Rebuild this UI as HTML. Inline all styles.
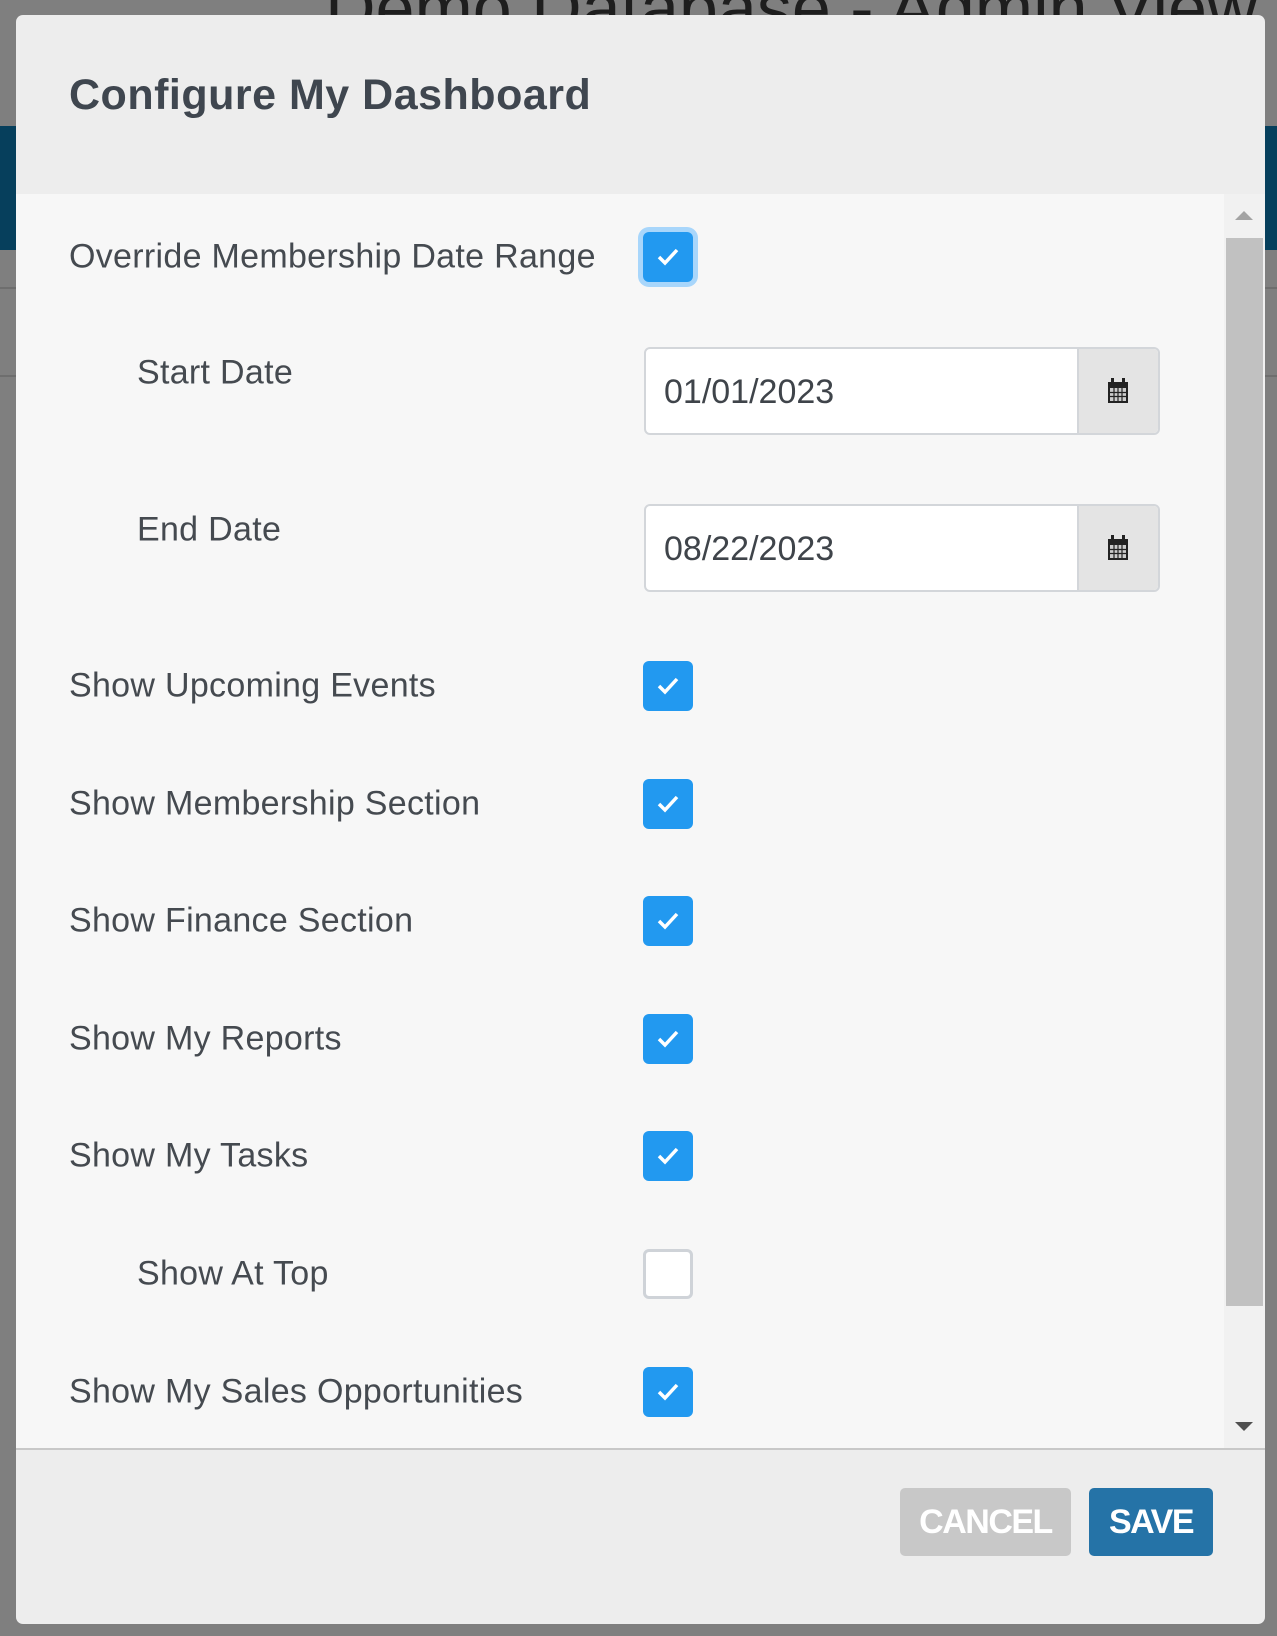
<!DOCTYPE html>
<html><head><meta charset="utf-8"><style>
*{box-sizing:border-box;margin:0;padding:0}
body{width:1277px;height:1636px;background:#7f7f7f;position:relative;overflow:hidden;font-family:"Liberation Sans",sans-serif;color:#454a50}
.bgtitle{position:absolute;left:325px;top:-32px;font-size:70px;color:#1e1e1e;white-space:nowrap}
.band{position:absolute;left:0;top:126px;width:1277px;height:124px;background:#063f5c}
.bgline{position:absolute;left:0;width:1277px;height:2px;background:#6e6e6e}
.modal{position:absolute;left:16px;top:15px;width:1249px;height:1609px;background:#ededed;border-radius:7px;overflow:hidden}
.title{position:absolute;left:53px;top:56px;font-size:43px;font-weight:bold;color:#3f464f;letter-spacing:0.5px}
.body{position:absolute;left:0;top:179px;width:1249px;height:1256px;background:#f7f7f7;border-bottom:2px solid #c8c8c8}
.sb{position:absolute;right:0;top:0;width:41px;height:1254px;background:#f1f1f1}
.thumb{position:absolute;left:2px;top:44px;width:37px;height:1068px;background:#c1c1c1}
.up{position:absolute;left:11px;top:17px;border-left:9px solid transparent;border-right:9px solid transparent;border-bottom:9px solid #a3a3a3}
.down{position:absolute;left:11px;top:1228px;border-left:9px solid transparent;border-right:9px solid transparent;border-top:9px solid #505050}
.lbl{position:absolute;font-size:34px;white-space:nowrap;transform:translateY(-50%);letter-spacing:0.3px}
.cb{position:absolute;left:627px;width:50px;height:50px;border-radius:6px;background:#2299f0;transform:translateY(-50%)}
.cb svg{position:absolute;left:13px;top:14px}
.cb.off{background:#fff;border:3px solid #cfd3d8}
.cb.focus{box-shadow:0 0 0 5px #a8d6fb}
.inp{position:absolute;left:628px;width:516px;height:88px;border:2px solid #d3d6da;border-radius:6px;background:#fff;overflow:hidden}
.inp span{position:absolute;left:18px;top:24px;font-size:34px;color:#3f444a}
.addon{position:absolute;right:0;top:0;width:81px;height:100%;background:#e4e4e4;border-left:2px solid #d3d6da}
.addon svg{position:absolute;left:28px;top:29px}
.btn{position:absolute;top:1473px;height:68px;border-radius:5px;color:#fff;font-weight:bold;font-size:34px;text-align:center;line-height:68px;letter-spacing:-1.5px}
</style></head><body>
<div class="bgtitle">Demo Database - Admin View</div>
<div class="band"></div>
<div class="bgline" style="top:287px"></div>
<div class="bgline" style="top:375px"></div>
<div class="modal">
<div class="title">Configure My Dashboard</div>
<div class="body">
<div class="sb"><div class="up"></div><div class="thumb"></div><div class="down"></div></div>
</div>
<div class="btn" style="left:884px;width:171px;background:#c8c8c8">CANCEL</div>
<div class="btn" style="left:1073px;width:124px;background:#2573a7">SAVE</div>
</div>
<div style="position:absolute;left:16px;top:15px">
<div class="lbl" style="left:53px;top:242px">Override Membership Date Range</div>
<div class="cb focus" style="top:242px"><svg width="24" height="22" viewBox="0 0 24 22"><path d="M3 11l6 6L21 4" fill="none" stroke="#fff" stroke-width="3.5"/></svg></div>
<div class="lbl" style="left:121px;top:358px">Start Date</div>
<div class="inp" style="top:332px"><span>01/01/2023</span><div class="addon"><svg width="22" height="26" viewBox="0 0 22 26"><rect x="1" y="4" width="20" height="21" fill="#222"/><rect x="4" y="0" width="3" height="6" fill="#222"/><rect x="15" y="0" width="3" height="6" fill="#222"/><g fill="#ccc"><rect x="3" y="10" width="16" height="13"/></g><g stroke="#222" stroke-width="1.2"><path d="M7 10v13M11 10v13M15 10v13M3 14.5h16M3 18.5h16"/></g></svg></div></div>
<div class="lbl" style="left:121px;top:515px">End Date</div>
<div class="inp" style="top:489px"><span>08/22/2023</span><div class="addon"><svg width="22" height="26" viewBox="0 0 22 26"><rect x="1" y="4" width="20" height="21" fill="#222"/><rect x="4" y="0" width="3" height="6" fill="#222"/><rect x="15" y="0" width="3" height="6" fill="#222"/><g fill="#ccc"><rect x="3" y="10" width="16" height="13"/></g><g stroke="#222" stroke-width="1.2"><path d="M7 10v13M11 10v13M15 10v13M3 14.5h16M3 18.5h16"/></g></svg></div></div>
<div class="lbl" style="left:53px;top:671px">Show Upcoming Events</div>
<div class="cb" style="top:671px"><svg width="24" height="22" viewBox="0 0 24 22"><path d="M3 11l6 6L21 4" fill="none" stroke="#fff" stroke-width="3.5"/></svg></div>
<div class="lbl" style="left:53px;top:789px">Show Membership Section</div>
<div class="cb" style="top:789px"><svg width="24" height="22" viewBox="0 0 24 22"><path d="M3 11l6 6L21 4" fill="none" stroke="#fff" stroke-width="3.5"/></svg></div>
<div class="lbl" style="left:53px;top:906px">Show Finance Section</div>
<div class="cb" style="top:906px"><svg width="24" height="22" viewBox="0 0 24 22"><path d="M3 11l6 6L21 4" fill="none" stroke="#fff" stroke-width="3.5"/></svg></div>
<div class="lbl" style="left:53px;top:1024px">Show My Reports</div>
<div class="cb" style="top:1024px"><svg width="24" height="22" viewBox="0 0 24 22"><path d="M3 11l6 6L21 4" fill="none" stroke="#fff" stroke-width="3.5"/></svg></div>
<div class="lbl" style="left:53px;top:1141px">Show My Tasks</div>
<div class="cb" style="top:1141px"><svg width="24" height="22" viewBox="0 0 24 22"><path d="M3 11l6 6L21 4" fill="none" stroke="#fff" stroke-width="3.5"/></svg></div>
<div class="lbl" style="left:121px;top:1259px">Show At Top</div>
<div class="cb off" style="top:1259px"></div>
<div class="lbl" style="left:53px;top:1377px">Show My Sales Opportunities</div>
<div class="cb" style="top:1377px"><svg width="24" height="22" viewBox="0 0 24 22"><path d="M3 11l6 6L21 4" fill="none" stroke="#fff" stroke-width="3.5"/></svg></div>
</div>
</body></html>
